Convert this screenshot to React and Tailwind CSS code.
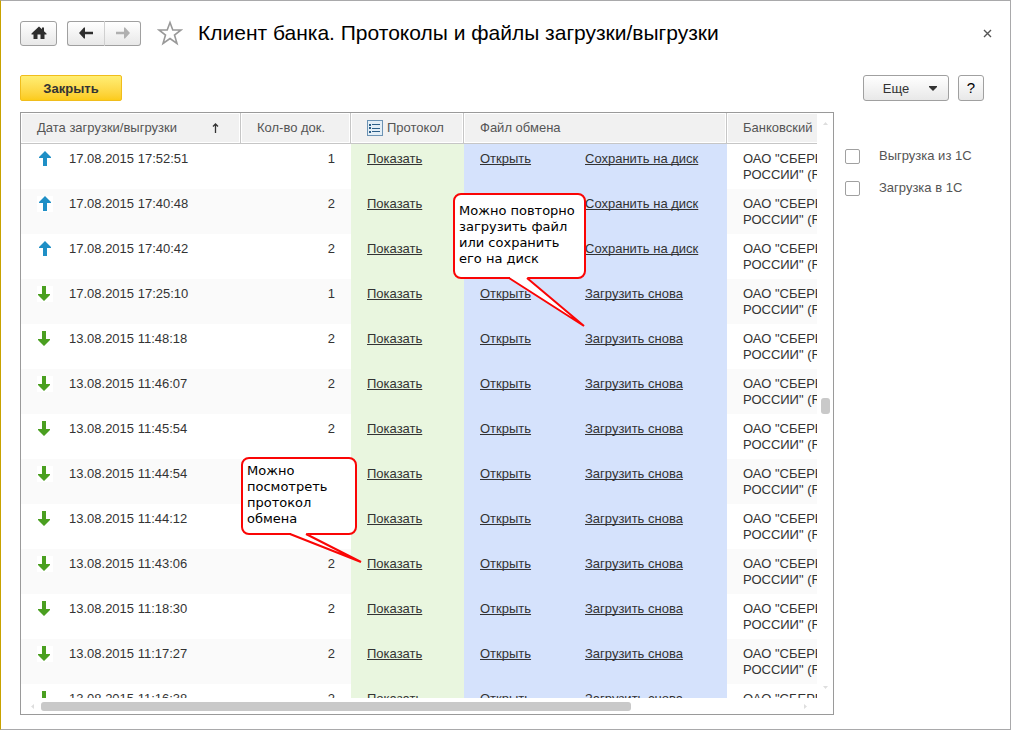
import React, { useState } from "react";

const BANK = 'ОАО "СБЕРБАНК РОССИИ" (RUB)';

const rows = [
  { date: "17.08.2015 17:52:51", count: 1, type: "upload" },
  { date: "17.08.2015 17:40:48", count: 2, type: "upload" },
  { date: "17.08.2015 17:40:42", count: 2, type: "upload" },
  { date: "17.08.2015 17:25:10", count: 1, type: "download" },
  { date: "13.08.2015 11:48:18", count: 2, type: "download" },
  { date: "13.08.2015 11:46:07", count: 2, type: "download" },
  { date: "13.08.2015 11:45:54", count: 2, type: "download" },
  { date: "13.08.2015 11:44:54", count: 2, type: "download" },
  { date: "13.08.2015 11:44:12", count: 2, type: "download" },
  { date: "13.08.2015 11:43:06", count: 2, type: "download" },
  { date: "13.08.2015 11:18:30", count: 2, type: "download" },
  { date: "13.08.2015 11:17:27", count: 2, type: "download" },
  { date: "13.08.2015 11:16:38", count: 2, type: "download" },
];

function HomeIcon() {
  return (
    <svg width="16" height="14" viewBox="0 0 16 14" fill="#2e2e2e">
      <path d="M8 0.5 L11 3.3 V1.5 H13 V5.2 L15.5 7.6 V8.6 H13.5 V13 H9.5 V8.5 H6.5 V13 H2.5 V8.6 H0.5 V7.6 Z" />
    </svg>
  );
}

function NavArrow({ className }) {
  return (
    <svg width="14" height="12" viewBox="0 0 14 12" className={className} fill="currentColor">
      <path d="M0 6 L5 0.5 H6 V4.8 H14 V7.2 H6 V11.5 H5 Z" />
    </svg>
  );
}

function StarIcon() {
  return (
    <svg width="26" height="26" viewBox="0 0 26 26" fill="#fff" stroke="#999" strokeWidth="1.6">
      <path d="M13 2.5 L15.8 10 H24 L17.5 15 L20 23.5 L13 18.6 L6 23.5 L8.5 15 L2 10 H10.2 Z" />
    </svg>
  );
}

function ListIcon() {
  return (
    <svg width="16" height="16" viewBox="0 0 16 16">
      <rect x="0.5" y="0.5" width="15" height="15" fill="#e3eef6" stroke="#6c93b4" />
      <path d="M2 4h2v2H2zM2 7h2v2H2zM2 11h2v2H2z" fill="#2d5f88" />
      <path d="M5 4.5h8M5 8.5h8M5 11.5h8" stroke="#2d5f88" />
    </svg>
  );
}

function DirectionIcon({ type }) {
  if (type === "upload") {
    return (
      <svg width="16" height="16" viewBox="0 0 16 16" className="bg-white" role="img" aria-label="Выгрузка">
        <path d="M8 0 L14 6 V7 H10 V15 H6 V7 H2 V6 Z" fill="#1f8fc6" />
      </svg>
    );
  }
  return (
    <svg width="16" height="16" viewBox="0 0 16 16" className="bg-white" role="img" aria-label="Загрузка">
      <path d="M7 15 L13 9 V8 H9 V0 H5 V8 H1 V9 Z" fill="#4a9f20" />
    </svg>
  );
}

function Triangle({ d }) {
  return (
    <svg width="5" height="5" viewBox="0 0 5 5" fill="#dedede" className="shrink-0">
      <path d={d} />
    </svg>
  );
}

function HeaderCell({ children }) {
  return (
    <th className="h-[31px] border-r border-b border-[#c6c6c6] bg-[#f1f1f1] px-4 text-left font-normal text-[#555] shadow-[inset_0_0_0_1px_#fff]">
      {children}
    </th>
  );
}

function CellLink({ children }) {
  return (
    <a href="#" className="underline [text-decoration-skip-ink:none] underline-offset-1">
      {children}
    </a>
  );
}

export default function App() {
  const [showUpload, setShowUpload] = useState(false);
  const [showDownload, setShowDownload] = useState(false);

  const button =
    "flex items-center justify-center border border-[#a0a0a0] bg-linear-to-b from-white to-[#e8e8e8]";
  const checkbox =
    "size-[15px] appearance-none rounded-xs border border-[#a0a0a0] bg-white checked:bg-[#ffd83d]";

  return (
    <div className="flex h-screen flex-col border border-[#a9a9ab] border-l-[#c8a200] bg-white pt-[19px] pr-[26px] pb-[14px] pl-[19px] font-['Liberation_Sans',Arial,sans-serif] text-[13px] leading-4 text-[#333]">
      <header className="flex h-[26px] items-center">
        <button aria-label="Домой" className={`${button} h-[25px] w-[37px] rounded-[3px]`}>
          <HomeIcon />
        </button>
        <div className="ml-[10px] flex">
          <button aria-label="Назад" className={`${button} h-[25px] w-[38px] rounded-l-[3px] border-r-[#d0d0d0]`}>
            <NavArrow className="text-[#2e2e2e]" />
          </button>
          <button aria-label="Вперед" className={`${button} h-[25px] w-9 rounded-r-[3px] border-l-0`}>
            <NavArrow className="rotate-180 text-[#b0b0b0]" />
          </button>
        </div>
        <button aria-label="В избранное" className="ml-4">
          <StarIcon />
        </button>
        <h1 className="ml-[15px] flex-1 text-[21px] leading-6 text-black">
          Клиент банка. Протоколы и файлы загрузки/выгрузки
        </h1>
        <button aria-label="Закрыть окно" className="-mr-3 p-1">
          <svg width="9" height="9" viewBox="0 0 9 9" stroke="#555" strokeWidth="1.4">
            <path d="M1 1 L8 8 M8 1 L1 8" />
          </svg>
        </button>
      </header>

      <div className="mt-[29px] flex items-center">
        <button className="h-[26px] w-[102px] rounded-xs border border-[#f0bd1c] bg-linear-to-b from-[#ffee72] to-[#fccb17] pt-px font-bold">
          Закрыть
        </button>
        <button className={`${button} ml-auto h-[26px] w-[86px] gap-5 rounded-[3px] pt-px pl-2`}>
          Еще
          <svg width="8" height="5" viewBox="0 0 8 5" fill="#333">
            <path d="M0 0 H8 V1 L4 5 L0 1 Z" />
          </svg>
        </button>
        <button className={`${button} ml-[9px] h-[26px] w-[26px] rounded-[3px] text-[15px] text-black`}>
          ?
        </button>
      </div>

      <main className="mt-[11px] flex min-h-0 flex-1 gap-[11px]">
        <section className="relative flex min-w-0 flex-1 flex-col border border-[#9a9a9a]">
          <div className="flex min-h-0 flex-1">
            <div className="min-w-0 flex-1 overflow-hidden">
              <table className="w-[906px] table-fixed border-separate border-spacing-0">
                <colgroup>
                  <col className="w-[220px]" />
                  <col className="w-[110px]" />
                  <col className="w-[113px]" />
                  <col className="w-[263px]" />
                  <col className="w-[200px]" />
                </colgroup>
                <thead>
                  <tr>
                    <HeaderCell>
                      <span className="flex items-center justify-between pr-1">
                        Дата загрузки/выгрузки
                        <svg width="9" height="10" viewBox="0 0 9 10" fill="none" stroke="#333" strokeWidth="1.3">
                          <path d="M4.5 10 V1 M2 3.5 L4.5 1 L7 3.5" />
                        </svg>
                      </span>
                    </HeaderCell>
                    <HeaderCell>Кол-во док.</HeaderCell>
                    <HeaderCell>
                      <span className="flex items-center gap-1">
                        <ListIcon />
                        Протокол
                      </span>
                    </HeaderCell>
                    <HeaderCell>Файл обмена</HeaderCell>
                    <HeaderCell>Банковский</HeaderCell>
                  </tr>
                </thead>
                <tbody>
                  {rows.map((row) => (
                    <tr key={row.date} className="h-[45px] align-top even:bg-[#fafafa]">
                      <td className="px-4 pt-[7px]">
                        <span className="flex items-center gap-4">
                          <DirectionIcon type={row.type} />
                          {row.date}
                        </span>
                      </td>
                      <td className="px-4 pt-[7px] text-right">{row.count}</td>
                      <td className="bg-[#e9f6df] px-4 pt-[7px]">
                        <CellLink>Показать</CellLink>
                      </td>
                      <td className="bg-[#d5e2fc] px-4 pt-[7px]">
                        <span className="grid grid-cols-[105px_1fr]">
                          <span>
                            <CellLink>Открыть</CellLink>
                          </span>
                          <span>
                            <CellLink>
                              {row.type === "upload" ? "Сохранить на диск" : "Загрузить снова"}
                            </CellLink>
                          </span>
                        </span>
                      </td>
                      <td className="pt-[7px] pr-[60px] pl-4">{BANK}</td>
                    </tr>
                  ))}
                </tbody>
              </table>
            </div>

            {/* vertical scrollbar */}
            <div className="flex w-4 flex-col items-center py-2 pl-px">
              <Triangle d="M0 4 L2.5 1 L5 4 Z" />
              <div className="flex-1" />
              <div className="h-4 w-[9px] rounded-[3px] bg-[#c9c9c9]" />
              <div className="flex-1" />
              <Triangle d="M0 1 L2.5 4 L5 1 Z" />
            </div>
          </div>

          {/* horizontal scrollbar */}
          <div className="flex h-4 items-center pr-[25px] pl-[9px]">
            <Triangle d="M4 0 L1 2.5 L4 5 Z" />
            <div className="mx-[6px] flex-1">
              <div className="h-[9px] w-[78%] rounded-[3px] bg-[#c9c9c9]" />
            </div>
            <Triangle d="M1 0 L4 2.5 L1 5 Z" />
          </div>

          {/* hints over the table */}
          <div className="absolute top-[80px] left-[432px] h-[86px] w-[133px] rounded-lg border-2 border-[#fa0505] bg-white px-1 py-2 font-['DejaVu_Sans',Verdana,sans-serif] text-[13px] leading-4 whitespace-nowrap text-black">
            Можно повторно
            <br />
            загрузить файл
            <br />
            или сохранить
            <br />
            его на диск
            <svg width="80" height="52" viewBox="0 0 80 52" className="absolute top-[82px] left-[52px]">
              <path d="M3 0 L20 0 L77 49 L3 2 Z" fill="#fff" />
              <path d="M2 1 L77 49 L20 1" fill="none" stroke="#fa0505" strokeWidth="2" />
            </svg>
          </div>
          <div className="absolute top-[344px] left-[220px] h-[78px] w-[116px] rounded-lg border-2 border-[#fa0505] bg-white p-1 font-['DejaVu_Sans',Verdana,sans-serif] text-[13px] leading-4 whitespace-nowrap text-black">
            Можно
            <br />
            посмотреть
            <br />
            протокол
            <br />
            обмена
            <svg width="76" height="32" viewBox="0 0 76 32" className="absolute top-[74px] left-[45px]">
              <path d="M3 0 L18 0 L73 29 L3 2 Z" fill="#fff" />
              <path d="M2 1 L73 29 L18 1" fill="none" stroke="#fa0505" strokeWidth="2" />
            </svg>
          </div>
        </section>

        <aside className="flex w-[139px] flex-col gap-4 pt-9 text-[#555]">
          <label className="flex items-center gap-[19px]">
            <input
              type="checkbox"
              className={checkbox}
              checked={showUpload}
              onChange={(e) => setShowUpload(e.target.checked)}
            />
            Выгрузка из 1С
          </label>
          <label className="flex items-center gap-[19px]">
            <input
              type="checkbox"
              className={checkbox}
              checked={showDownload}
              onChange={(e) => setShowDownload(e.target.checked)}
            />
            Загрузка в 1С
          </label>
        </aside>
      </main>
    </div>
  );
}
